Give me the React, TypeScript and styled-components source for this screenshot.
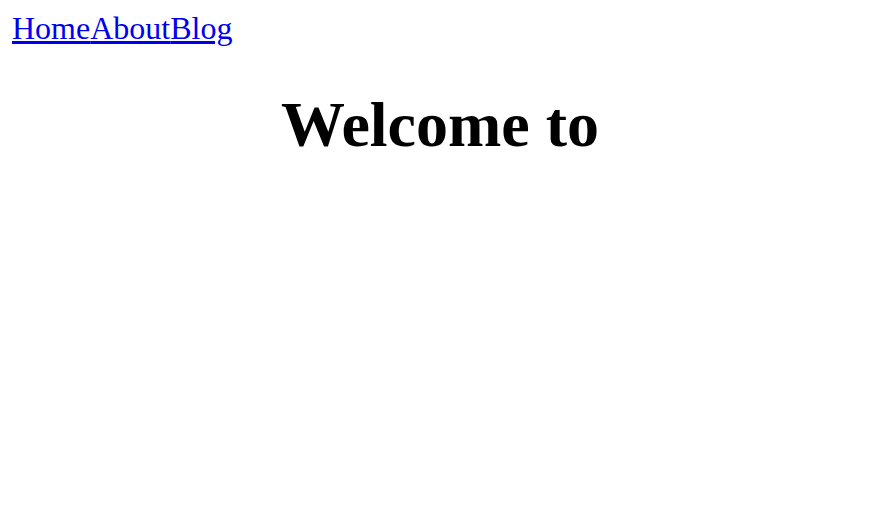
import React from "react";
import styled, { createGlobalStyle } from "styled-components";

const Global = createGlobalStyle`
  html, body { margin: 0; padding: 0; background: #fff; }
  body { font-family: "Liberation Serif", "Times New Roman", serif; color: #000; }
`;

const Page = styled.div`
  padding: 10px 12px;
`;

const Nav = styled.nav`
  display: flex;
  font-size: 32px;
  line-height: 1.15;
`;

const NavLink = styled.a`
  color: #0000ee;
  text-decoration: underline;
`;

const Title = styled.h1`
  margin: 41px 0 0;
  text-align: center;
  font-size: 64px;
  font-weight: bold;
  line-height: 1.15;
`;

export default function App() {
  return (
    <>
      <Global />
      <Page>
        <Nav>
          <NavLink href="#">Home</NavLink>
          <NavLink href="#">About</NavLink>
          <NavLink href="#">Blog</NavLink>
        </Nav>
        <Title>Welcome to</Title>
      </Page>
    </>
  );
}
